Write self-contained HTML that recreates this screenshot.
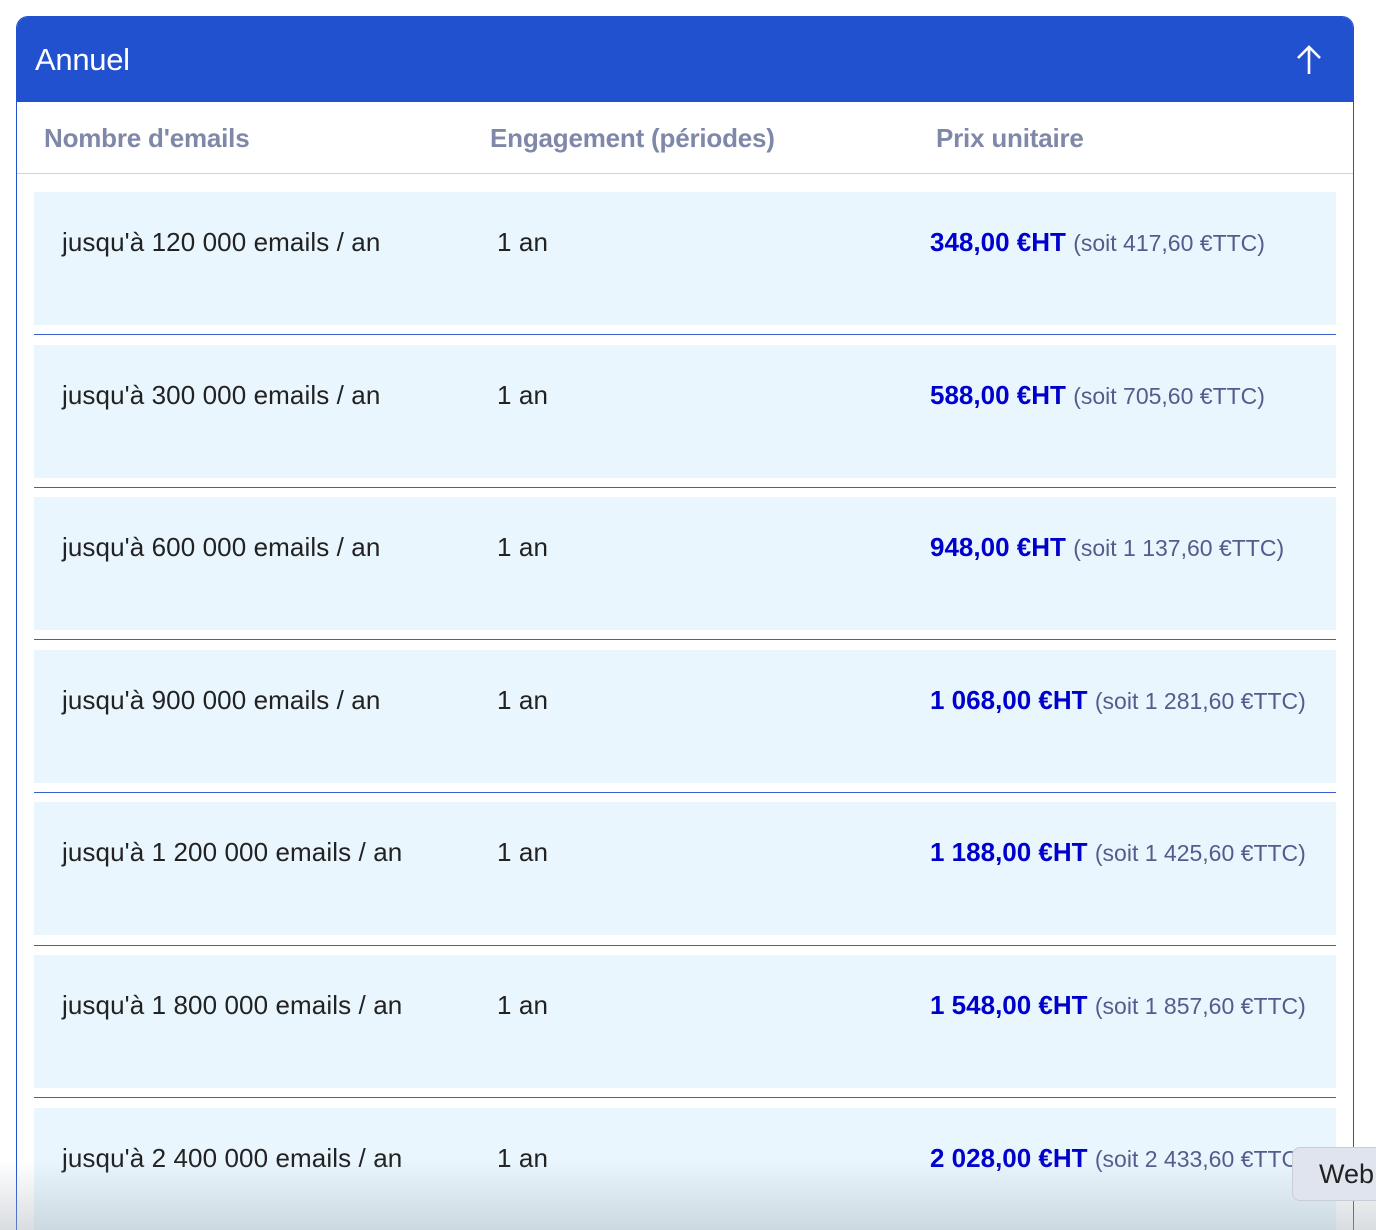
<!DOCTYPE html>
<html><head><meta charset="utf-8"><style>
html,body{margin:0;padding:0;background:#fff;width:1376px;height:1230px;overflow:hidden;font-family:"Liberation Sans",sans-serif;position:relative}
.card{position:absolute;left:16px;top:16px;width:1336px;height:1213px;border:1px solid #2251cf;border-bottom:none;border-radius:12px 12px 0 0;overflow:hidden}
.hd{height:85px;background:#2251cf;color:#fff;font-size:31px;position:relative}
.hd span{position:absolute;left:18px;top:25px;letter-spacing:-0.3px}
.th{height:71px;border-bottom:1px solid #cfd3dd;position:relative;color:#8088aa;font-weight:bold;font-size:26px}
.th div{position:absolute;top:21px;letter-spacing:-0.2px}
.rows{padding:18px 17px 0 17px}
.row{height:133px;background:#e9f6fd;position:relative;font-size:26px;color:#222;letter-spacing:0.1px}
.sep{height:1px;background:#3b5fcf;margin:9.3px 0 9.3px 0}
.row div{position:absolute;top:35px}
.p b{color:#0000cc;letter-spacing:0}
.p span{color:#555b8c;font-size:23px;letter-spacing:0}
</style></head><body>
<div class="card">
<div class="hd"><span>Annuel</span>
<svg style="position:absolute;left:1278px;top:27px" width="28" height="32" viewBox="0 0 28 32"><path d="M14 30V3M3 14L14 3L25 14" fill="none" stroke="#fff" stroke-width="2.6"/></svg></div>
<div class="th"><div style="left:27px">Nombre d'emails</div><div style="left:473px">Engagement (périodes)</div><div style="left:919px">Prix unitaire</div></div>
<div class="rows">
<div class="row"><div style="left:28px">jusqu'à 120 000 emails / an</div><div style="left:463px">1 an</div><div class="p" style="left:896px"><b>348,00 €HT</b> <span>(soit 417,60 €TTC)</span></div></div>
<div class="sep"></div>
<div class="row"><div style="left:28px">jusqu'à 300 000 emails / an</div><div style="left:463px">1 an</div><div class="p" style="left:896px"><b>588,00 €HT</b> <span>(soit 705,60 €TTC)</span></div></div>
<div class="sep"></div>
<div class="row"><div style="left:28px">jusqu'à 600 000 emails / an</div><div style="left:463px">1 an</div><div class="p" style="left:896px"><b>948,00 €HT</b> <span>(soit 1 137,60 €TTC)</span></div></div>
<div class="sep"></div>
<div class="row"><div style="left:28px">jusqu'à 900 000 emails / an</div><div style="left:463px">1 an</div><div class="p" style="left:896px"><b>1 068,00 €HT</b> <span>(soit 1 281,60 €TTC)</span></div></div>
<div class="sep"></div>
<div class="row"><div style="left:28px">jusqu'à 1 200 000 emails / an</div><div style="left:463px">1 an</div><div class="p" style="left:896px"><b>1 188,00 €HT</b> <span>(soit 1 425,60 €TTC)</span></div></div>
<div class="sep"></div>
<div class="row"><div style="left:28px">jusqu'à 1 800 000 emails / an</div><div style="left:463px">1 an</div><div class="p" style="left:896px"><b>1 548,00 €HT</b> <span>(soit 1 857,60 €TTC)</span></div></div>
<div class="sep"></div>
<div class="row"><div style="left:28px">jusqu'à 2 400 000 emails / an</div><div style="left:463px">1 an</div><div class="p" style="left:896px"><b>2 028,00 €HT</b> <span>(soit 2 433,60 €TTC)</span></div></div>
</div></div>
<div style="position:absolute;left:0;top:1160px;width:1376px;height:70px;background:linear-gradient(rgba(180,190,200,0),rgba(170,180,190,0.45))"></div>
<div style="position:absolute;left:1292px;top:1147px;width:100px;height:52px;background:#dfe4ef;border-radius:8px;border:1px solid #c8cdd8;font-size:27px;color:#222"><span style="position:absolute;left:26px;top:11px">Web</span></div>
</body></html>
